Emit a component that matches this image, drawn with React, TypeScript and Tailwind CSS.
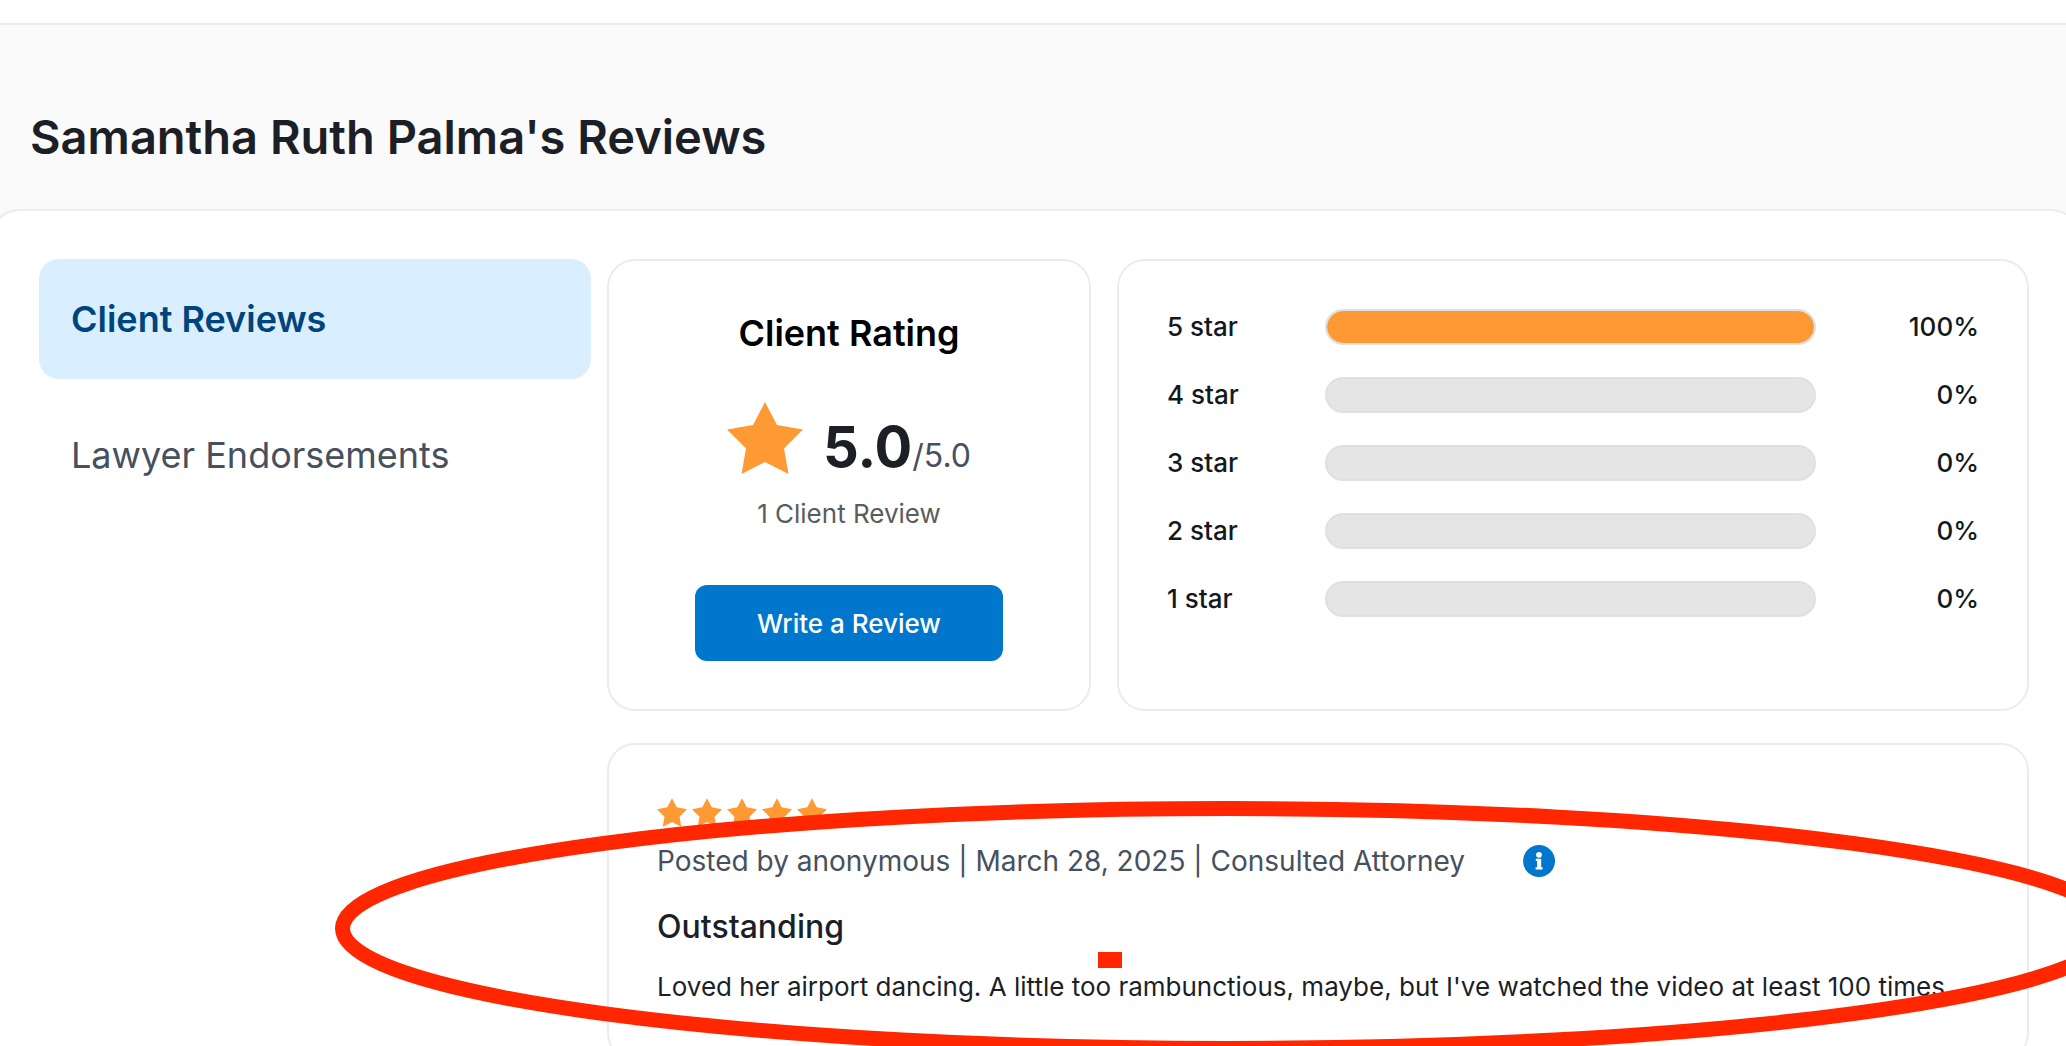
const ratings = [
  { label: '5 star', percent: 100 },
  { label: '4 star', percent: 0 },
  { label: '3 star', percent: 0 },
  { label: '2 star', percent: 0 },
  { label: '1 star', percent: 0 },
];

function Star({ className }: { className: string }) {
  return (
    <svg className={className} viewBox="0 0 76 72" fill="#ff9933" aria-hidden="true">
      <path d="M38 0 L50 23 L76 27.500 L57 46.500 L61.500 72 L38 60 L14.500 72 L19 46.500 L0 27.500 L26 23 Z" />
    </svg>
  );
}

function InfoIcon() {
  return (
    <svg className="size-8" viewBox="0 0 32 32" aria-hidden="true">
      <circle cx="16" cy="16" r="16" fill="#0077cc" />
      <circle cx="16" cy="9.800" r="2.900" fill="#fff" />
      <path d="M12.800 13.800 H18.200 V22.200 H19.500 V24.500 H12.600 V22.200 H14.100 V16 H12.800 Z" fill="#fff" />
    </svg>
  );
}

function Sidebar() {
  return (
    <nav className="flex flex-col gap-4 text-[36px] leading-10">
      <a href="#client-reviews" className="rounded-[20px] bg-[#d9efff] px-8 py-10 font-semibold text-[#00447c]">
        Client Reviews
      </a>
      <a href="#endorsements" className="rounded-[20px] px-8 py-10 text-[#46505e]">
        Lawyer Endorsements
      </a>
    </nav>
  );
}

function ClientRating() {
  return (
    <section className="flex flex-col items-center rounded-[28px] border-2 border-[#ebebf0] pt-[52px] pb-12">
      <h2 className="text-[36px] leading-10 font-semibold text-black">Client Rating</h2>
      <div className="mt-[49px] flex h-[72px] items-end gap-5">
        <Star className="h-[72px] w-[76px]" />
        <p className="text-[32px] leading-9 text-[#46505e]">
          <span className="text-[56px] font-bold text-[#1c1f26]">5.0</span>/5.0
        </p>
      </div>
      <p className="mt-5 text-[26px] leading-10 text-[#5c5c5c]">1 Client Review</p>
      <button
        type="button"
        className="mt-[51px] h-[76px] w-[308px] rounded-xl bg-[#0077cc] text-[26px] font-medium text-white"
      >
        Write a Review
      </button>
    </section>
  );
}

function RatingBreakdown() {
  return (
    <section className="rounded-[28px] border-2 border-[#ebebf0] p-12">
      <ul className="flex flex-col gap-8">
        {ratings.map(({ label, percent }) => (
          <li
            key={label}
            className="grid grid-cols-[158px_1fr_163px] items-center text-[26px] leading-9 font-medium text-[#12191d]"
          >
            <span>{label}</span>
            <div className="h-9 overflow-hidden rounded-full border-2 border-[#e0e0e0] bg-[#e5e5e5]">
              <div className="h-full rounded-full bg-[#ff9933]" style={{ width: `${percent}%` }} />
            </div>
            <span className="text-right">{percent}%</span>
          </li>
        ))}
      </ul>
    </section>
  );
}

function Review() {
  return (
    <div className="relative">
      <article className="h-[318px] rounded-[28px] border-2 border-[#ebebf0] px-12 pt-[53px] whitespace-nowrap">
        <div className="flex gap-[5px]">
          {[1, 2, 3, 4, 5].map((n) => (
            <Star key={n} className="h-[29px] w-[30px]" />
          ))}
        </div>
        <div className="mt-[14px] flex items-center gap-[58px] text-[28px] leading-10 text-[#46505e]">
          <p>Posted by anonymous | March 28, 2025 | Consulted Attorney</p>
          <button type="button" aria-label="More information">
            <InfoIcon />
          </button>
        </div>
        <h3 className="mt-[26px] text-[32px] leading-10 font-medium text-[#1c1f26]">Outstanding</h3>
        <p className="mt-5 text-[26px] leading-10 text-[#1c1f26]">
          Loved her airport dancing. A little too rambunctious, maybe, but I've watched the video at least 100 times.
        </p>
      </article>
      {/* hand-drawn marker over the review */}
      <svg
        className="pointer-events-none absolute top-[58px] -left-[272px] h-[255px] w-[1787px] max-w-none"
        viewBox="0 0 1787 255"
        aria-hidden="true"
      >
        <ellipse cx="893.500" cy="127.500" rx="886" ry="120" fill="none" stroke="#ff2600" strokeWidth="15" />
        <rect x="763" y="151" width="24" height="16" fill="#ff2600" />
      </svg>
    </div>
  );
}

export default function App() {
  return (
    <main className="h-screen overflow-hidden bg-[#fafafa] font-['Inter',sans-serif]">
      <div className="h-[25px] border-b-2 border-[#ebebf0] bg-white" />
      <h1 className="px-[30px] pt-20 pb-10 text-[47px] leading-[64px] font-semibold text-[#1c1f26]">
        Samantha Ruth Palma's Reviews
      </h1>
      <div className="-mr-4 -ml-3 grid grid-cols-[552px_minmax(0,1fr)] items-start gap-4 rounded-[32px] border-2 border-[#ebebf0] bg-white py-12 pr-[51px] pl-[49px]">
        <Sidebar />
        <div className="flex flex-col gap-8">
          <div className="grid grid-cols-[484px_1fr] gap-[26px]">
            <ClientRating />
            <RatingBreakdown />
          </div>
          <Review />
        </div>
      </div>
    </main>
  );
}
